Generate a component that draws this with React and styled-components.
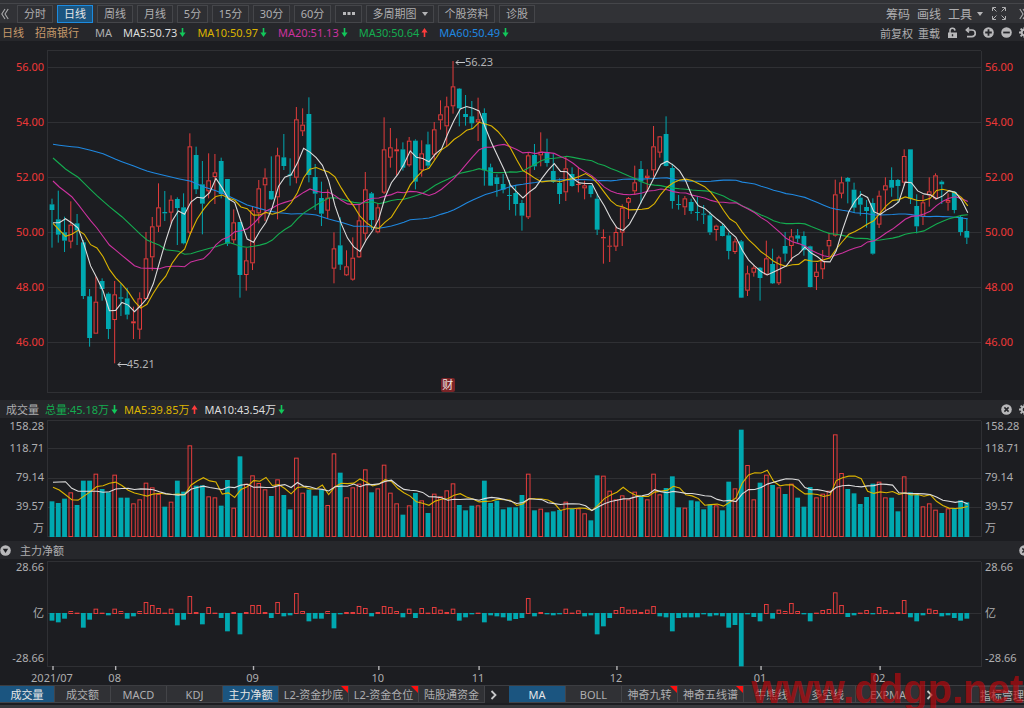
import React, { useState } from "react";
import styled, { createGlobalStyle } from "styled-components";

const CHART_WIDTH = 935;
const STEP = 6.266;
const RED = "#e43c3c";
const TEAL = "#00a8b0";
const WHITE = "#dcdcdc";
const YELLOW = "#dcb400";
const MAGENTA = "#cc329f";
const GREEN = "#14ac50";
const BLUE = "#1f88e0";
const LINE = "#2f3034";

// direction, high, body top, body bottom, low (a third of a chart unit each)
const candles = `
D 326 343 360 473|D 302 388 434 458|D 380 427 452 486|U 334 404 455 475|D 372 400 421 465
D 450 457 618 627|D 597 619 744 770|U 560 635 731 731|D 565 573 597 632|D 607 611 717 747
U 573 613 690 820|D 580 622 626 678|D 594 625 674 688|U 650 694 700 747|U 607 625 719 747
U 426 505 627 627|U 381 409 502 542|U 280 352 410 426|D 303 366 370 393|U 316 329 368 400
D 322 327 354 465|D 310 352 460 463|U 130 169 428 432|D 170 195 298 312|D 213 283 341 433
U 190 271 304 325|U 192 247 261 342|D 203 213 312 325|D 267 267 461 468|U 358 397 451 461
D 396 396 555 623|U 473 511 555 602|U 348 361 520 540|U 270 295 370 400|U 235 263 286 393
D 199 303 328 330|U 173 196 322 388|D 132 202 228 240|D 205 253 257 287|U 51 88 263 280
U 55 104 124 138|D 22 72 255 277|D 222 261 311 360|D 275 324 371 408|U 298 323 362 385
U 427 475 536 580|D 382 466 524 540|U 481 529 556 558|U 442 503 569 572|U 342 391 502 504
U 246 298 431 452|D 306 310 390 420|U 340 352 427 430|U 82 178 308 312|U 114 172 203 233
U 145 178 184 255|D 157 178 233 242|U 141 152 226 230|D 148 152 275 298|U 151 190 241 260
D 125 163 227 235|U 96 118 194 210|U 31 73 91 119|U 20 49 109 170|U -87 -11 49 71
D -6 -4 55 109|D 15 72 81 107|D 33 79 100 118|U 23 88 97 153|D 55 69 241 287
D 221 232 287 288|D 253 262 282 320|D 252 282 299 310|D 270 315 318 360|D 288 309 342 377
D 330 339 377 422|U 188 196 382 387|D 162 195 229 240|U 127 185 196 229|D 146 187 219 230
D 191 243 276 279|D 265 279 312 342|U 200 235 307 333|D 232 252 288 290|U 232 282 285 307
U 272 286 295 328|D 284 286 312 322|D 313 326 419 435|U 418 441 445 521|U 437 467 470 516
U 410 426 470 483|U 343 353 428 468|U 321 324 338 387|U 227 277 304 315|D 213 237 275 340
U 238 257 264 305|U 108 169 241 260|U 138 139 188 203|D 79 132 228 229|D 221 234 333 356
D 315 342 345 359|U 318 325 352 375|D 326 336 363 372|D 319 366 369 392|D 345 371 374 402
D 365 376 427 435|U 404 407 420 452|D 402 408 438 439|D 427 436 483 508|U 445 454 486 492
D 450 454 623 624|U 527 550 602 618|U 526 533 548 560|D 531 533 564 632|U 452 505 554 556
D 476 522 580 582|U 497 502 580 585|D 426 468 491 515|U 417 439 468 514|D 417 436 446 458
D 424 438 480 497|D 467 469 591 592|U 519 545 561 600|U 480 512 538 567|U 430 450 469 498
U 269 313 437 440|U 260 277 311 325|D 261 264 275 340|D 278 299 353 367|D 303 323 344 377
D 330 351 363 413|D 325 339 491 494|U 302 317 404 414|U 262 286 301 361|D 232 270 293 320
D 267 270 288 338|U 178 198 278 288|D 178 178 326 342|D 313 348 409 430|U 315 337 380 405
U 262 304 316 350|U 250 256 326 330|D 271 275 283 342|U 310 330 338 362|D 303 306 360 370
D 375 381 426 437|D 387 423 443 462`
  .trim()
  .split(/[|\n]/)
  .map((row) => {
    const [dir, ...v] = row.split(" ");
    const [high, top, bottom, low] = v.map(Number);
    return { up: dir === "U", high, top, bottom, low };
  });

const volumes = [
  316, 321, 308, 289, 327, 254, 254, 233, 279, 289, 236, 305, 305, 322, 310,
  260, 274, 294, 332, 317, 254, 287, 148, 269, 268, 301, 304, 329, 252, 335,
  181, 263, 238, 261, 280, 300, 250, 297, 340, 185, 290, 281, 299, 281, 327,
  172, 230, 304, 274, 263, 220, 289, 277, 206, 290, 322, 356, 328, 291, 313,
  351, 293, 301, 283, 262, 327, 343, 329, 328, 254, 321, 314, 340, 334, 334,
  297, 233, 343, 338, 349, 346, 342, 317, 338, 337, 352, 373, 238, 239, 284,
  310, 298, 310, 287, 302, 310, 233, 295, 276, 241, 334, 335, 313, 316, 340,
  325, 328, 343, 257, 277, 101, 207, 310, 260, 236, 267, 274, 294, 263, 305,
  332, 273, 304, 293, 284, 115, 231, 279, 292, 324, 303, 263, 257, 304, 305,
  346, 241, 289, 297, 331, 322, 341, 351, 337, 337, 313, 319,
];

const netFlow = [
  -23, -28, -17, 6, 1, -44, -20, 13, 1, -7, 13, 6, -17, -10, 6, 33, 24, 15, 1,
  13, -37, -20, 51, 3, -34, 18, 1, -15, -55, 3, -64, 3, 24, 24, 3, -15, 33,
  -10, -7, 60, 6, -25, -17, -17, 6, -46, -4, 3, 3, 21, 15, -10, 3, 21, 18, 6,
  -13, 13, -15, 15, 1, 18, 10, 3, 13, -23, -13, -4, 1, -28, -7, -10, -13, -23,
  -18, -15, 45, -10, 3, -4, -7, -4, 13, 1, 8, -10, -7, -64, -40, -15, 9, 18,
  10, 10, 3, 10, 21, -10, -13, -55, -15, -13, -13, -13, -4, -10, -7, -10, -44,
  -36, -160, -4, -12, -25, 27, -17, 10, 6, 30, 6, -4, -25, 1, 9, 12, 62, 24,
  -12, -7, 1, 9, -4, 18, 9, 1, 3, 39, -13, -25, -7, 13, 9, -10, -7, -15, -23,
  -17,
];

// averages that reach back before the first visible day: [day, value]
const priceAverages = [
  {
    period: 60,
    color: BLUE,
    seed: [
      [0, 163], [2, 168], [4, 172], [6, 181], [8, 191], [10, 208], [13, 229],
      [15, 243], [17, 253], [19, 262], [22, 274], [24, 290], [26, 302],
      [28, 318], [31, 345], [34, 361], [36, 368], [38, 372], [40, 371],
      [42, 375], [44, 387], [46, 397], [48, 409], [50, 409], [52, 415],
      [54, 408], [56, 397], [57, 389], [58, 388],
    ],
  },
  {
    period: 30,
    color: GREEN,
    seed: [
      [0, 204], [2, 237], [4, 262], [7, 317], [9, 350], [11, 380], [14, 434],
      [15, 450], [17, 466], [18, 479], [20, 484], [21, 493], [22, 491],
      [24, 480], [26, 470], [28, 457],
    ],
  },
  {
    period: 20,
    color: MAGENTA,
    seed: [
      [0, 273], [1, 291], [3, 320], [4, 343], [6, 392], [7, 414], [9, 465],
      [11, 496], [13, 527], [14, 534], [17, 536], [18, 530],
    ],
  },
  {
    period: 10,
    color: YELLOW,
    seed: [
      [0, 400], [1, 420], [2, 439], [3, 433], [4, 421], [5, 433], [6, 464],
      [7, 474], [8, 500],
    ],
  },
  { period: 5, color: WHITE, seed: [[0, 398], [1, 398], [2, 386], [3, 399]] },
];

const volumeAverages = [
  { period: 5, color: YELLOW, seed: [[0, 274], [1, 282], [3, 311]] },
  {
    period: 10,
    color: WHITE,
    seed: [[0, 259], [2, 257], [3, 277], [4, 286], [7, 286], [8, 289]],
  },
];

const months = [
  { day: 0, label: "2021/07" },
  { day: 10, label: "08" },
  { day: 32, label: "09" },
  { day: 52, label: "10" },
  { day: 68, label: "11" },
  { day: 90, label: "12" },
  { day: 113, label: "01" },
  { day: 132, label: "02" },
];

const dayX = (i) => 5 + STEP * i;
const percent = (x) => `${(x / CHART_WIDTH) * 100}%`;

function interpolate(seed, i) {
  const next = seed.findIndex(([day]) => day >= i);
  const [d1, v1] = seed[next];
  if (d1 === i) return v1;
  const [d0, v0] = seed[next - 1];
  return v0 + ((v1 - v0) * (i - d0)) / (d1 - d0);
}

function averagePoints(values, { period, seed }, offset) {
  return values
    .map((_, i) => {
      const value =
        i < period - 1
          ? interpolate(seed, i)
          : values.slice(i - period + 1, i + 1).reduce((a, b) => a + b, 0) /
            period;
      return `${(dayX(i) + 1).toFixed(1)},${(value / 3 + offset).toFixed(1)}`;
    })
    .join(" ");
}

function Bar({ i, up, top, bottom }) {
  const x = dayX(i);
  const height = Math.max(bottom - top, 1);
  if (!up || height < 2) {
    return (
      <rect
        x={x - 2.4}
        y={top}
        width={4.8}
        height={height}
        fill={up ? RED : TEAL}
      />
    );
  }
  return (
    <rect
      x={x - 1.8}
      y={top + 0.5}
      width={3.6}
      height={height - 1}
      fill="none"
      stroke={RED}
    />
  );
}

function Frame({ top, bottom, lines }) {
  return (
    <g stroke={LINE} shapeRendering="crispEdges">
      <path d={`M934 ${top}H0.5V${bottom}H934`} fill="none" />
      <path d={`M934.5 ${top}V${bottom}`} strokeWidth="2" />
      {lines.map((y) => (
        <path key={y} d={`M0 ${y}H934`} />
      ))}
    </g>
  );
}

function Averages({ values, list, offset }) {
  return list.map((line) => (
    <polyline
      key={line.period}
      points={averagePoints(values, line, offset)}
      fill="none"
      stroke={line.color}
      strokeWidth="1.1"
    />
  ));
}

function PriceChart() {
  const closes = candles.map((c) => (c.up ? c.top : c.bottom));
  return (
    <Plot height={359} viewBox="0 0 935 359" preserveAspectRatio="none">
      <Frame
        top={9.5}
        bottom={351.5}
        lines={[26.5, 81.5, 136.5, 191.5, 246.5, 301.5]}
      />
      {candles.map((c, i) => {
        const [high, top, bottom, low] = [c.high, c.top, c.bottom, c.low].map(
          (v) => v / 3 + 49
        );
        return (
          <g key={i}>
            <path
              d={`M${dayX(i)} ${high}V${top}M${dayX(i)} ${bottom}V${low}`}
              stroke={c.up ? RED : TEAL}
            />
            <Bar i={i} up={c.up} top={top} bottom={bottom} />
          </g>
        );
      })}
      <Averages values={closes} list={priceAverages} offset={49} />
    </Plot>
  );
}

function VolumeChart() {
  return (
    <Plot height={123} viewBox="0 0 935 123" preserveAspectRatio="none">
      <Frame top={2.5} bottom={118.5} lines={[30.5, 60.5, 89.5]} />
      {volumes.map((v, i) => (
        <Bar key={i} i={i} up={candles[i].up} top={v / 3 - 22} bottom={119} />
      ))}
      <Averages values={volumes} list={volumeAverages} offset={-22} />
    </Plot>
  );
}

function NetChart() {
  return (
    <Plot height={112} viewBox="0 0 935 112" preserveAspectRatio="none">
      <Frame top={2.5} bottom={107.5} lines={[54.5]} />
      {netFlow.map((v, i) => (
        <Bar
          key={i}
          i={i}
          up={v > 0}
          top={v > 0 ? 54 - v / 3 : 54}
          bottom={v > 0 ? 55 : 54 - v / 3}
        />
      ))}
      {months.map(({ day }) => (
        <path
          key={day}
          d={`M${dayX(day) + 1} 107V111`}
          stroke="#b4b4b6"
          strokeWidth="1.4"
        />
      ))}
    </Plot>
  );
}

function Arrow({ up }) {
  return (
    <svg width="7" height="9" viewBox="0 0 7 9">
      <path
        d="M2.7 0H4.3V4.4H6.6L3.5 9L0.4 4.4H2.7Z"
        fill={up ? "#ff3b3b" : "#12c85a"}
        transform={up ? "rotate(180 3.5 4.5)" : undefined}
      />
    </svg>
  );
}

const iconPaths = {
  lock: (
    <>
      <path
        d="M3 6V4a2.5 2.5 0 0 1 5-0.4"
        fill="none"
        stroke="currentColor"
        strokeWidth="1.5"
      />
      <path d="M1 5.5H10V11H1Z" fill="currentColor" />
      <path d="M5.5 7.2V9.3" stroke="#26272b" strokeWidth="1.4" />
    </>
  ),
  undo: (
    <path
      d="M1.5 3H7A3.2 3.2 0 0 1 7 9.6H2M4 0.6L1.4 3L4 5.4"
      fill="none"
      stroke="currentColor"
      strokeWidth="1.7"
    />
  ),
  plus: (
    <>
      <circle cx="5.5" cy="5.5" r="5.3" fill="currentColor" />
      <path d="M2.2 5.5H8.8M5.5 2.2V8.8" stroke="#26272b" strokeWidth="1.8" />
    </>
  ),
  minus: (
    <>
      <circle cx="5.5" cy="5.5" r="5.3" fill="currentColor" />
      <path d="M2.2 5.5H8.8" stroke="#26272b" strokeWidth="1.8" />
    </>
  ),
  close: (
    <>
      <circle cx="5.5" cy="5.5" r="5.3" fill="currentColor" />
      <path d="M3.4 3.4L7.6 7.6M7.6 3.4L3.4 7.6" stroke="#26272b" strokeWidth="1.5" />
    </>
  ),
  gear: (
    <>
      <circle cx="5.5" cy="5.5" r="2.9" fill="none" stroke="currentColor" strokeWidth="2.2" />
      <path
        d="M5.5 0V2M5.5 9V11M0 5.5H2M9 5.5H11M1.6 1.6L3 3M8 8L9.4 9.4M9.4 1.6L8 3M3 8L1.6 9.4"
        stroke="currentColor"
        strokeWidth="1.8"
      />
    </>
  ),
  fold: (
    <>
      <circle cx="5.5" cy="5.5" r="5.3" fill="currentColor" />
      <path d="M2.8 3.8H8.2L5.5 8Z" fill="#1c1d21" />
    </>
  ),
};

function Icon({ name }) {
  return (
    <svg width="11" height="11" viewBox="0 0 11 11">
      {iconPaths[name]}
    </svg>
  );
}

function Chevron({ double, left }) {
  return (
    <svg width="8" height="12" viewBox="0 0 8 12">
      <path
        d={double ? "M0.8 1L4 6L0.8 11M4 1L7.2 6L4 11" : "M1.5 2L5.5 6L1.5 10"}
        transform={left ? "rotate(180 4 6)" : undefined}
        fill="none"
        stroke={double ? "#a9a9ab" : "#c8c8ca"}
        strokeWidth={double ? 1.1 : 1.8}
      />
    </svg>
  );
}

const periods = [
  ["分时", 36],
  ["日线", 36],
  ["周线", 36],
  ["月线", 36],
  ["5分", 31],
  ["15分", 37],
  ["30分", 37],
  ["60分", 37],
];

const prices = ["56.00", "54.00", "52.00", "50.00", "48.00", "46.00"];
const volumeScale = ["158.28", "118.71", "79.14", "39.57", "万"];
const netScale = ["28.66", "亿", "-28.66"];

const paneTabs = [
  { label: "成交量", width: 55, active: true },
  { label: "成交额", width: 56 },
  { label: "MACD", width: 56 },
  { label: "KDJ", width: 56 },
  { label: "主力净额", width: 56, active: true },
  { label: "L2-资金抄底", width: 70, flag: true },
  { label: "L2-资金仓位", width: 70, flag: true },
  { label: "陆股通资金", width: 66 },
];

const mainTabs = [
  { label: "MA", width: 57, active: true },
  { label: "BOLL", width: 56 },
  { label: "神奇九转", width: 56, flag: true },
  { label: "神奇五线谱", width: 66, flag: true },
  { label: "牛熊线", width: 56 },
  { label: "多空线", width: 56 },
  { label: "EXPMA", width: 65 },
];

function TabGroup({ tabs }) {
  return tabs.map((tab) => (
    <Tab key={tab.label} $width={tab.width} $active={tab.active}>
      {tab.label}
      {tab.flag && <Flag />}
    </Tab>
  ));
}

function Scale({ labels, right }) {
  return (
    <ScaleColumn $rows={labels.length} $right={right}>
      {labels.map((label) => (
        <span key={label}>{label}</span>
      ))}
    </ScaleColumn>
  );
}

function PriceScale({ right }) {
  return (
    <PriceColumn $right={right}>
      {prices.map((price) => (
        <span key={price}>{price}</span>
      ))}
    </PriceColumn>
  );
}

function Reading({ color, up, children }) {
  return (
    <Value $color={color}>
      {children}
      <Arrow up={up} />
    </Value>
  );
}

function App() {
  const [period, setPeriod] = useState("日线");
  return (
    <Page>
      <GlobalStyle />
      <TopStrip />
      <Toolbar>
        <IconButton aria-label="收起">
          <Chevron double left />
        </IconButton>
        <PeriodList>
          {periods.map(([label, width]) => (
            <PeriodButton
              key={label}
              $width={width}
              $active={label === period}
              onClick={() => setPeriod(label)}
            >
              {label}
            </PeriodButton>
          ))}
          <PeriodButton $width={27} aria-label="更多">
            <svg width="12" height="3" viewBox="0 0 12 3" fill="#b8b8ba">
              <path d="M0 0H3V3H0ZM4.5 0H7.5V3H4.5ZM9 0H12V3H9Z" />
            </svg>
          </PeriodButton>
          <PeriodButton $width={68}>
            多周期图
            <Caret />
          </PeriodButton>
          <PeriodButton $width={57}>个股资料</PeriodButton>
          <PeriodButton $width={36}>诊股</PeriodButton>
        </PeriodList>
        <Tools>
          <ToolButton>筹码</ToolButton>
          <ToolButton>画线</ToolButton>
          <ToolButton>
            工具
            <Caret />
          </ToolButton>
          <IconButton aria-label="全屏">
            <svg width="14" height="13" viewBox="0 0 14 13" fill="none" stroke="#aeaeb0">
              <path d="M4 0.5H0.5V4M10 0.5H13.5V4M4 12.5H0.5V9M10 12.5H13.5V9M1 1L4.5 4.5M13 1L9.5 4.5M1 12L4.5 8.5M13 12L9.5 8.5" />
            </svg>
          </IconButton>
          <IconButton aria-label="展开">
            <Chevron double />
          </IconButton>
        </Tools>
      </Toolbar>

      <Header $gap={11} $indent={2}>
        <Value $color="#c79a6c">日线</Value>
        <Value $color="#c79a6c">招商银行</Value>
        <MaName>MA</MaName>
        <Reading color={WHITE}>MA5:50.73</Reading>
        <Reading color={YELLOW}>MA10:50.97</Reading>
        <Reading color={MAGENTA}>MA20:51.13</Reading>
        <Reading color={GREEN} up>
          MA30:50.64
        </Reading>
        <Reading color={BLUE}>MA60:50.49</Reading>
        <HeaderTools>
          <TextButtons>
            <TextButton>前复权</TextButton>
            <TextButton>重载</TextButton>
          </TextButtons>
          <IconButton aria-label="锁定"><Icon name="lock" /></IconButton>
          <IconButton aria-label="撤销"><Icon name="undo" /></IconButton>
          <IconButton aria-label="放大"><Icon name="plus" /></IconButton>
          <IconButton aria-label="缩小"><Icon name="minus" /></IconButton>
          <IconButton aria-label="设置"><Icon name="gear" /></IconButton>
        </HeaderTools>
      </Header>
      <Pane>
        <PriceScale />
        <PlotArea>
          <PriceChart />
          <Mark style={{ left: percent(dayX(64) + 2), top: 13 }}>
            <MarkArrow />
            56.23
          </Mark>
          <Mark style={{ left: percent(dayX(10) + 2), top: 315 }}>
            <MarkArrow />
            45.21
          </Mark>
          <Report style={{ left: percent(dayX(63)) }}>财</Report>
        </PlotArea>
        <PriceScale right />
      </Pane>

      <Header $gap={6} $indent={6}>
        <Value>成交量</Value>
        <Reading color={GREEN}>总量:45.18万</Reading>
        <Reading color={YELLOW} up>
          MA5:39.85万
        </Reading>
        <Reading color={WHITE}>MA10:43.54万</Reading>
        <HeaderTools>
          <IconButton aria-label="关闭"><Icon name="close" /></IconButton>
          <IconButton aria-label="设置"><Icon name="gear" /></IconButton>
        </HeaderTools>
      </Header>
      <Pane>
        <Scale labels={volumeScale} />
        <VolumeChart />
        <Scale labels={volumeScale} right />
      </Pane>

      <Header $gap={9} $indent={0}>
        <IconButton aria-label="折叠"><Icon name="fold" /></IconButton>
        <Value>主力净额</Value>
        <HeaderTools>
          <IconButton aria-label="关闭"><Icon name="close" /></IconButton>
        </HeaderTools>
      </Header>
      <Pane>
        <Scale labels={netScale} />
        <NetChart />
        <Scale labels={netScale} right />
      </Pane>
      <Dates>
        {months.map(({ day, label }) => (
          <DateLabel key={label} style={{ left: percent(dayX(day)) }}>
            {label}
          </DateLabel>
        ))}
      </Dates>

      <TabBar>
        <TabGroup tabs={paneTabs} />
        <NextButton aria-label="下一组">
          <Chevron />
        </NextButton>
        <TabGroup tabs={mainTabs} />
        <NextButton aria-label="下一组">
          <Chevron />
        </NextButton>
        <ManageButton>指标管理</ManageButton>
      </TabBar>
      <BottomStrip />
      <Watermark>www.ddgp.net</Watermark>
    </Page>
  );
}

export default App;

const GlobalStyle = createGlobalStyle`
  * {
    box-sizing: border-box;
  }
  body {
    margin: 0;
    background: #1c1d21;
    overflow: hidden;
  }
  body, button {
    font-family: "Noto Sans", "Noto Sans CJK SC", sans-serif;
    font-size: 11px;
  }
  button {
    display: flex;
    align-items: center;
    justify-content: center;
    flex-shrink: 0;
    padding: 0;
    border: 0;
    background: none;
    color: #aeaeb0;
    white-space: nowrap;
  }
`;
const Page = styled.div`
  position: relative;
  overflow: hidden;
  color: #aeaeb0;
`;
const TopStrip = styled.div`
  height: 3px;
  background: #313236;
`;
const Toolbar = styled.div`
  display: flex;
  align-items: center;
  height: 20px;
  padding-left: 1px;
  border-top: 1px solid #45464a;
  background: #313236;
`;
const PeriodList = styled.div`
  display: flex;
  gap: 4px;
  margin-left: 8px;
`;
const PeriodButton = styled.button`
  width: ${(p) => p.$width}px;
  height: 18px;
  line-height: 16px;
  border: 1px solid ${(p) => (p.$active ? "#1c8be0" : "#45464a")};
  background: ${(p) => (p.$active ? "#1b5580" : "#2e2f33")};
  color: ${(p) => (p.$active ? "#e6e6e6" : "#aeaeb0")};
`;
const Caret = styled.i`
  margin-left: 5px;
  border: 3px solid transparent;
  border-top: 4px solid #b4b4b6;
  border-bottom: 0;
`;
const Tools = styled.div`
  display: flex;
  align-items: center;
  gap: 7px;
  margin: 0 -3px 0 auto;

  svg {
    margin-left: 2px;
  }
  button:last-child svg {
    margin-left: 6px;
  }
`;
const ToolButton = styled.button`
  font-size: 12px;
`;
const IconButton = styled.button`
  color: #b8b8ba;
`;
const Header = styled.div`
  display: flex;
  align-items: center;
  gap: ${(p) => p.$gap}px;
  height: 18px;
  padding: 1px 0 0 ${(p) => p.$indent}px;
  background: #26272b;
  line-height: 17px;
  white-space: nowrap;
`;
const Value = styled.span`
  display: flex;
  align-items: center;
  gap: 2px;
  color: ${(p) => p.$color || "#aeaeb0"};
`;
const MaName = styled.span`
  margin-left: 5px;
`;
const HeaderTools = styled.div`
  display: flex;
  gap: 7px;
  margin: 0 -6px 0 auto;
`;
const TextButtons = styled.div`
  display: flex;
  gap: 5px;
`;
const TextButton = styled.button``;
const Pane = styled.div`
  display: grid;
  grid-template-columns: 47px minmax(0, 1fr) 42px;
`;
const PlotArea = styled.div`
  position: relative;
`;
const Plot = styled.svg`
  display: block;
  width: 100%;
  height: ${(p) => p.height}px;
`;
const PriceColumn = styled.div`
  display: flex;
  flex-direction: column;
  gap: 35px;
  padding: 16px 3px 0;
  color: #ee3838;
  line-height: 20px;
  text-align: ${(p) => (p.$right ? "left" : "right")};
`;
const ScaleColumn = styled.div`
  display: grid;
  grid-template-rows: ${(p) =>
    p.$rows === 5 ? "15px 29px 29px 29px 15px" : "15px 76px 15px"};
  align-content: start;
  align-items: center;
  padding: 0 3px;
  line-height: 15px;
  text-align: ${(p) => (p.$right ? "left" : "right")};
`;
const Mark = styled.div`
  position: absolute;
  display: flex;
  align-items: center;
  line-height: 16px;
  color: #b4b4b6;
`;
const MarkArrow = () => (
  <svg width="10" height="7" viewBox="0 0 10 7">
    <path d="M10 3.5H1M3.5 1L1 3.5L3.5 6" fill="none" stroke="#c8c8ca" />
  </svg>
);
const Report = styled.div`
  position: absolute;
  bottom: 8px;
  width: 14px;
  height: 14px;
  margin-left: -6px;
  border-radius: 2px;
  background: #7c2427;
  color: #f0e4e4;
  line-height: 14px;
  text-align: center;
`;
const Dates = styled.div`
  position: relative;
  height: 14px;
  margin: 0 42px 0 47px;
`;
const DateLabel = styled.span`
  position: absolute;
  line-height: 13px;
  transform: translateX(-50%);
`;
const TabBar = styled.div`
  display: flex;
  height: 18px;
  border-top: 1px solid #3c3d41;
  background: #232428;
`;
const Tab = styled.button`
  position: relative;
  width: ${(p) => p.$width}px;
  border-right: 1px solid #434448;
  border-bottom: 1px solid #434448;
  background: ${(p) => (p.$active ? "#1b5580" : "#303135")};
  color: ${(p) => (p.$active ? "#e6e6e6" : "#aeaeb0")};
`;
const Flag = styled.i`
  position: absolute;
  top: 0;
  right: 0;
  border-top: 7px solid #ff1010;
  border-left: 7px solid transparent;
`;
const NextButton = styled.button`
  width: 17px;
  margin-right: 7px;
`;
const ManageButton = styled.button`
  width: 62px;
  margin: 0 -9px 0 auto;
  border: 1px solid #434448;
  background: #303135;
`;
const BottomStrip = styled.div`
  height: 5px;
  border-top: 2px solid #1c1d21;
  background: #38393d;
`;
const Watermark = styled.div`
  position: absolute;
  right: 1px;
  bottom: -1px;
  color: rgba(190, 8, 12, 0.68);
  font: bold 40px/40px "Liberation Sans", Arial, sans-serif;
  pointer-events: none;
`;
